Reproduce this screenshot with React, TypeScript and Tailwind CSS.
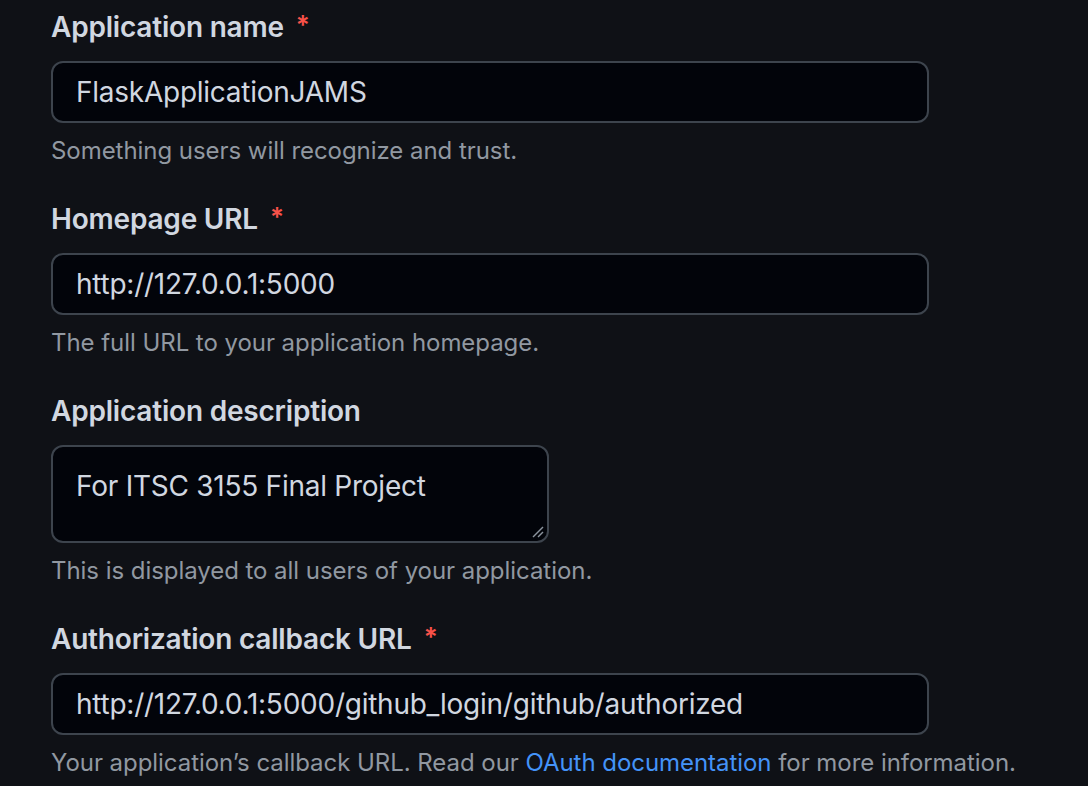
import React from "react";

const font = { fontFamily: "Inter, 'Noto Sans', sans-serif" };

function Label({ children, required }: { children: React.ReactNode; required?: boolean }) {
  return (
    <div className="h-[54px] flex items-center text-[28px] font-semibold text-[#d1d7e0] leading-none tracking-[-0.2px]">
      {children}
      {required && <span className="ml-[12px] text-[#f85149] text-[26px] relative top-[-2px]">*</span>}
    </div>
  );
}

function Input({ value }: { value: string }) {
  return (
    <div className="w-[878px] h-[62px] rounded-[12px] border-2 border-[#3d444d] bg-[#02040a] flex items-center pl-[23px] text-[28px] text-[#d1d7e0] leading-none tracking-[-0.25px]">
      {value}
    </div>
  );
}

function Help({ children }: { children: React.ReactNode }) {
  return (
    <div className="h-[56px] flex items-center text-[24px] text-[#9198a1] leading-none tracking-[-0.05px]">{children}</div>
  );
}

export default function App() {
  return (
    <div className="w-[1088px] h-[786px] bg-[#0f1116] overflow-hidden pl-[51px]" style={font}>
      <div>
        <Label required>Application name</Label>
        <div className="h-[7px]" />
        <Input value="FlaskApplicationJAMS" />
        <Help>Something users will recognize and trust.</Help>
      </div>
      <div>
        <div className="h-[13px]" />
        <Label required>Homepage URL</Label>
        <div className="h-[7px]" />
        <Input value="http://127.0.0.1:5000" />
        <Help>The full URL to your application homepage.</Help>
      </div>
      <div>
        <div className="h-[13px]" />
        <Label>Application description</Label>
        <div className="h-[7px]" />
        <div className="relative w-[498px] h-[98px] rounded-[12px] border-2 border-[#3d444d] bg-[#02040a] pl-[23px] pt-[22px] text-[28px] text-[#d1d7e0] leading-[34px] tracking-[-0.25px]">
          For ITSC 3155 Final Project
          <svg className="absolute right-[2px] bottom-[2px]" width="14" height="14" viewBox="0 0 14 14">
            <line x1="12" y1="2" x2="2" y2="12" stroke="#8b949e" strokeWidth="1.5" />
            <line x1="12" y1="7" x2="7" y2="12" stroke="#8b949e" strokeWidth="1.5" />
          </svg>
        </div>
        <Help>This is displayed to all users of your application.</Help>
      </div>
      <div>
        <div className="h-[13px]" />
        <Label required>Authorization callback URL</Label>
        <div className="h-[7px]" />
        <Input value="http://127.0.0.1:5000/github_login/github/authorized" />
        <Help>
          <span>
            Your application’s callback URL. Read our{" "}
            <span className="text-[#4493f8]">OAuth documentation</span> for more information.
          </span>
        </Help>
      </div>
    </div>
  );
}
